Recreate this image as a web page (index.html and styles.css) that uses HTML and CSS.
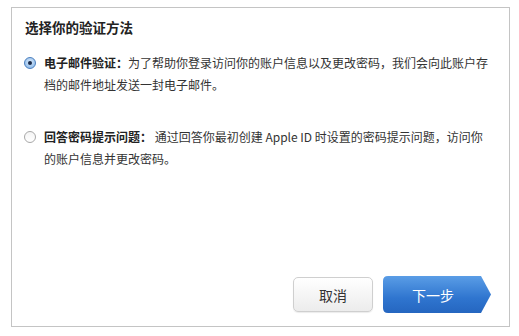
FILE: index.html
```html
<!DOCTYPE html>
<html lang="zh-CN">
<head>
<meta charset="utf-8">
<link rel="stylesheet" href="styles.css">
</head>
<body>
<div class="panel">
  <h1 class="title">选择你的验证方法</h1>
  <div class="options">
    <div class="option">
      <span class="radio radio-on"><span class="dot"></span></span>
      <p class="desc"><b>电子邮件验证：</b>为了帮助你登录访问你的账户信息以及更改密码，我们会向此账户存<br>档的邮件地址发送一封电子邮件。</p>
    </div>
    <div class="option">
      <span class="radio"></span>
      <p class="desc"><b>回答密码提示问题：</b> 通过回答你最初创建 Apple ID 时设置的密码提示问题，访问你<br>的账户信息并更改密码。</p>
    </div>
  </div>
  <div class="actions">
    <button class="btn btn-cancel">取消</button>
    <button class="btn btn-next">下一步</button>
  </div>
</div>
</body>
</html>
```
FILE: styles.css
```css
html, body {
  margin: 0;
  padding: 0;
  background: #fff;
}
body {
  width: 519px;
  height: 336px;
  overflow: hidden;
  font-family: "Noto Sans CJK SC", "Noto Sans", sans-serif;
  color: #333;
}
.panel {
  box-sizing: border-box;
  margin: 7px 0 0 11px;
  width: 499px;
  height: 320px;
  border: 1px solid #c4c4c4;
  display: flex;
  flex-direction: column;
  padding: 0 18px 13px 12px;
}
.title {
  margin: 9px 0 0 1px;
  font-size: 13.5px;
  line-height: 20px;
  font-weight: bold;
  color: #222;
}
.options {
  margin-top: 15px;
  display: flex;
  flex-direction: column;
  gap: 30px;
}
.option {
  display: flex;
  align-items: flex-start;
}
.radio {
  box-sizing: border-box;
  flex: none;
  width: 12px;
  height: 12px;
  margin: 5px 0 0 0;
  border-radius: 50%;
  border: 1px solid #a8a8a8;
  background: linear-gradient(#f4f4f4, #ffffff);
  display: flex;
  align-items: center;
  justify-content: center;
}
.radio-on {
  border-color: #4b7fbf;
  background: radial-gradient(circle at 50% 40%, #d8e9fa, #7fb1e6);
}
.dot {
  width: 4px;
  height: 4px;
  border-radius: 50%;
  background: #1a2a4a;
}
.desc {
  margin: 0 0 0 8px;
  font-size: 12px;
  line-height: 22px;
  letter-spacing: 0;
  white-space: nowrap;
  color: #333;
}
.desc b {
  font-weight: bold;
  color: #222;
}
.actions {
  margin-top: auto;
  display: flex;
  justify-content: flex-end;
  align-items: center;
  gap: 10px;
}
.btn {
  font-family: "Noto Sans CJK SC", "Noto Sans", sans-serif;
  font-size: 14px;
  padding: 0;
  cursor: pointer;
}
.btn-cancel {
  width: 80px;
  height: 35px;
  border: 1px solid #cfcfcf;
  border-radius: 5px;
  background: linear-gradient(#ffffff, #ececec);
  color: #333;
  box-shadow: 0 1px 1px rgba(0,0,0,0.08);
}
.btn-next {
  width: 108px;
  height: 37px;
  border: none;
  color: #fff;
  padding-right: 8px;
  background: linear-gradient(#5a9de6, #2f75cf 60%, #2566c0);
  clip-path: path('M5,0 H98 L108,18.5 L98,37 H5 Q0,37 0,32 V5 Q0,0 5,0 Z');
}
```
